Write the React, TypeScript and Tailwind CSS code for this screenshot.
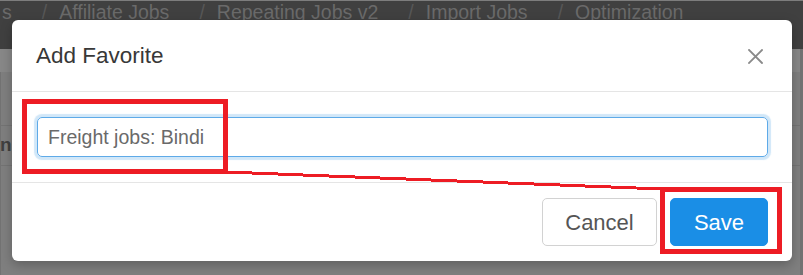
import React from "react";

const crumbs = ["s", "Affiliate Jobs", "Repeating Jobs v2", "Import Jobs", "Optimization"];

function Breadcrumbs() {
  return (
    <div className="flex h-[49px] items-start border-t border-[#7d7d7d] bg-[#404040] pl-[2px] pt-[2px] text-[19.5px] leading-none text-[#6a6a6a]">
      {crumbs.map((c, i) => (
        <React.Fragment key={c}>
          {i > 0 && <span className="pl-[30px] pr-[12px] text-[#575757]">/</span>}
          <span className="whitespace-nowrap">{c}</span>
        </React.Fragment>
      ))}
    </div>
  );
}

function PageBehind() {
  return (
    <div className="flex h-full flex-col">
      <Breadcrumbs />
      <div className="h-[23px] border-r-[3px] border-[#737373] bg-[#888888]" />
      <div className="flex flex-1 flex-col border-r-[3px] border-l border-[#737373] pt-[53px]">
        <div className="flex h-[41px] items-center border-y border-[#747474] text-[19px] font-bold text-[#404040]">
          <span className="-ml-[1px]">nis</span>
        </div>
      </div>
    </div>
  );
}

function CloseIcon() {
  return (
    <svg width="15" height="15" viewBox="0 0 15 15" className="block">
      <path d="M1 1 L14 14 M14 1 L1 14" stroke="#8a8a8a" strokeWidth="1.8" strokeLinecap="square" />
    </svg>
  );
}

function AddFavoriteModal() {
  return (
    <div className="absolute left-[12px] top-[20px] flex w-[780px] flex-col rounded-[6px] bg-white shadow-[0_4px_12px_rgba(0,0,0,0.25)]">
      <div className="flex h-[72px] items-center justify-between border-b border-[#e5e5e5] pl-[24px] pr-[29px]">
        <h4 className="mt-[2px] text-[22.5px] leading-none text-[#383838]">Add Favorite</h4>
        <button type="button" aria-label="Close" className="mt-[1px]">
          <CloseIcon />
        </button>
      </div>
      <div className="pb-[25px] pl-[25px] pr-[24px] pt-[25px]">
        <input
          type="text"
          defaultValue="Freight jobs: Bindi"
          className="h-[40px] w-full rounded-[5px] border border-[#5eaae8] px-[10px] text-[19.5px] text-[#6a6a6a] shadow-[0_0_1px_3px_rgba(102,175,233,0.3)] outline-none"
        />
      </div>
      <div className="flex justify-end gap-[13px] border-t border-[#e5e5e5] pb-[15px] pr-[24px] pt-[15px]">
        <button
          type="button"
          className="h-[48px] w-[115px] rounded-[5px] border border-[#d2d2d2] bg-white text-[22px] text-[#555]"
        >
          Cancel
        </button>
        <button
          type="button"
          className="h-[48px] w-[98px] rounded-[5px] border border-[#1a8ee6] bg-[#1a8ee6] text-[22px] text-white"
        >
          Save
        </button>
      </div>
    </div>
  );
}

function Annotations() {
  return (
    <>
      <svg className="pointer-events-none absolute left-0 top-0" width="803" height="275">
        <line x1="226" y1="172" x2="662" y2="189" stroke="#ed1c24" strokeWidth="3" shapeRendering="crispEdges" />
      </svg>
      <div className="pointer-events-none absolute left-[22px] top-[99px] h-[75px] w-[206px] border-[5px] border-[#ed1c24]" />
      <div className="pointer-events-none absolute left-[660px] top-[187px] h-[67px] w-[122px] border-[5px] border-[#ed1c24]" />
    </>
  );
}

export default function App() {
  return (
    <div className="relative h-[275px] w-[803px] overflow-hidden bg-[#7f7f7f] font-['Liberation_Sans',Arial,sans-serif]">
      <PageBehind />
      <AddFavoriteModal />
      <Annotations />
    </div>
  );
}
